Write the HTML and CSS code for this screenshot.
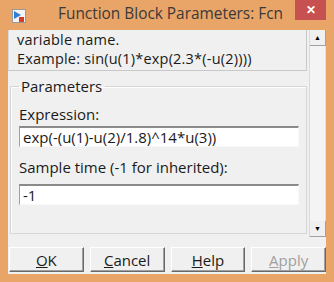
FILE: index.html
```html
<!DOCTYPE html>
<html lang="en">
<head>
    <meta charset="UTF-8">
    <title>Function Block Parameters: Fcn</title>
    <link rel="stylesheet" href="styles.css">
</head>
<body>
    <div class="window">
        <div class="titlebar">
            <svg class="app-icon" width="14" height="14" viewBox="0 0 14 14">
                <rect x="0.5" y="0.5" width="13" height="13" fill="#f4f4f4" stroke="#9a9a9a"/>
                <path d="M2 2 L9 6 L2 10 Z" fill="#2f7fd0"/>
                <rect x="7" y="8" width="5" height="5" fill="#d63a2a"/>
            </svg>
            <div class="title">Function Block Parameters: Fcn</div>
            <div class="close">&#x2715;</div>
        </div>

        <div class="client">
            <div class="pane">
                <div class="content">
                    <div class="desc">
                        <p>variable name.</p>
                        <p>Example: sin(u(1)*exp(2.3*(-u(2))))</p>
                    </div>

                    <fieldset class="group">
                        <legend>Parameters</legend>
                        <label>Expression:</label>
                        <div class="field">exp(-(u(1)-u(2)/1.8)^14*u(3))</div>
                        <label class="second">Sample time (-1 for inherited):</label>
                        <div class="field">-1</div>
                    </fieldset>
                </div>

                <div class="scrollbar">
                    <div class="arrow">&#9650;</div>
                    <div class="track"></div>
                    <div class="arrow">&#9660;</div>
                </div>
            </div>

            <div class="buttons">
                <button><u>O</u>K</button>
                <button><u>C</u>ancel</button>
                <button><u>H</u>elp</button>
                <button class="disabled"><u>A</u>pply</button>
            </div>
        </div>
    </div>
</body>
</html>
```

FILE: styles.css
```css
* {
    box-sizing: border-box;
}

body {
    margin: 0;
    font-family: "Open Sans", "Noto Sans", sans-serif;
    font-size: 15px;
    color: #1a1a1a;
}

.window {
    width: 334px;
    height: 282px;
    background: #e9a467;
    padding: 0 8px 8px 8px;
    display: flex;
    flex-direction: column;
}

.titlebar {
    height: 30px;
    display: flex;
    align-items: flex-start;
}

.app-icon {
    margin: 9px 0 0 4px;
}

.title {
    flex: 1;
    text-align: center;
    font-size: 15.4px;
    color: #3a3a3a;
    padding-top: 3px;
    padding-left: 20px;
}

.close {
    width: 31px;
    height: 20px;
    background: #c75050;
    color: #fff;
    font-size: 12px;
    font-weight: bold;
    text-align: center;
    line-height: 20px;
}

.client {
    flex: 1;
    background: #f0f0f0;
    display: flex;
    flex-direction: column;
}

.pane {
    height: 207px;
    display: flex;
}

.content {
    flex: 1;
    padding-right: 2px;
}

.desc {
    height: 41px;
    border: 1px solid #dadada;
    border-top: none;
    border-right-color: #c8c8c8;
    border-bottom-color: #c8c8c8;
    padding: 0 0 0 8px;
    overflow: hidden;
}

.desc p {
    margin: 0;
    font-size: 14.5px;
    letter-spacing: 0.2px;
    line-height: 19px;
}

.group {
    margin: 8px 0 0 2px;
    height: 155px;
    border: 1px solid #d5d5d5;
    box-shadow: inset 1px 1px 0 #fff;
    padding: 11px 0 0 8px;
}

.group legend {
    padding: 0 3px 0 2px;
    margin-left: 0;
    line-height: 15px;
}

.group label {
    display: block;
    line-height: 18px;
    margin-bottom: 3px;
}

.group .second {
    margin-bottom: 8px;
}

.field {
    width: 280px;
    height: 21px;
    background: #fff;
    border-top: 2px solid #8a8a8a;
    border-left: 1px solid #a0a0a0;
    border-bottom: 1px solid #f8f8f8;
    border-right: 1px solid #f8f8f8;
    padding-left: 3px;
    line-height: 18px;
    margin-bottom: 11px;
}

.scrollbar {
    width: 17px;
    display: flex;
    flex-direction: column;
    border-left: 1px solid #dadada;
    background: #f4f4f4;
}

.arrow {
    height: 16px;
    font-size: 7px;
    line-height: 16px;
    text-align: center;
    color: #000;
    background: #f0f0f0;
    border-right: 1px solid #a0a0a0;
    border-bottom: 1px solid #a0a0a0;
}

.track {
    flex: 1;
    border-right: 1px solid #e0e0e0;
}

.buttons {
    display: flex;
    gap: 6px;
    padding: 10px 0 0 1px;
}

.buttons button {
    width: 75px;
    height: 25px;
    font-family: inherit;
    font-size: 15px;
    color: #1a1a1a;
    background: #f0f0f0;
    border-top: 1px solid #fff;
    border-left: 1px solid #fff;
    border-right: 1px solid #696969;
    border-bottom: 1px solid #696969;
    box-shadow: inset -1px -1px 0 #a0a0a0;
    padding: 0;
}

.buttons .disabled {
    color: #a0a0a0;
}
```
